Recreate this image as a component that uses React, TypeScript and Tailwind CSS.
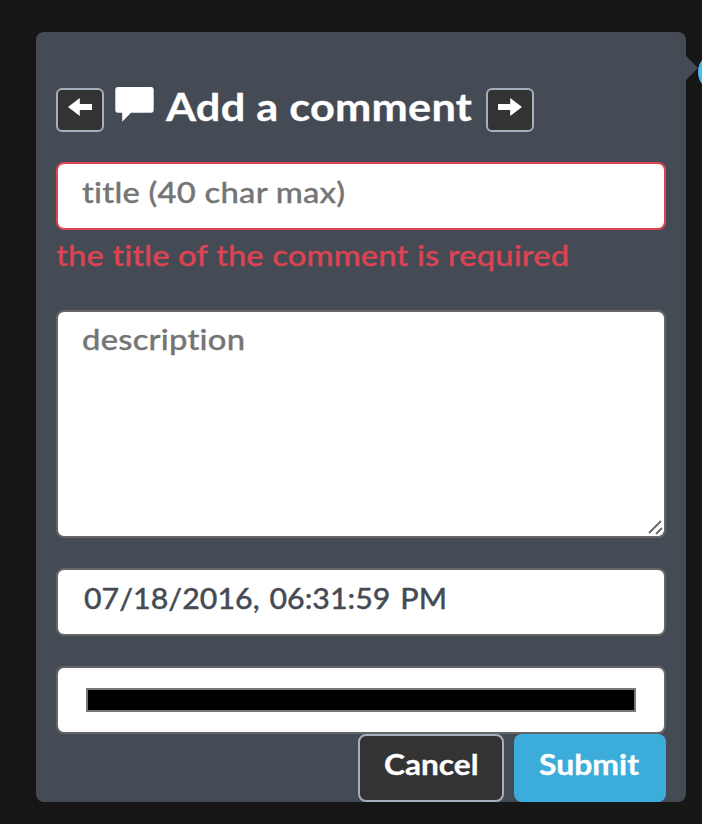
import type { ReactNode } from "react";

type LabelProps = { children: ReactNode; className: string };

function Label({ children, className }: LabelProps) {
  return (
    <span className={`block w-max origin-left whitespace-nowrap ${className}`}>{children}</span>
  );
}

function Arrow({ flipped = false }: { flipped?: boolean }) {
  return (
    <svg width="24" height="18" viewBox="0 0 24 18" className={flipped ? "-scale-x-100" : ""}>
      <path d="M0 9 11.8 0v6H24v6H11.8v6Z" fill="#fff" />
    </svg>
  );
}

const field = "h-[68px] w-full rounded-lg border-2 bg-white";
const navButton =
  "flex h-11 w-12 justify-center rounded-md border-2 border-[#a5afbd] bg-[#333] pt-2";

export default function App() {
  return (
    <main className="h-[824px] w-[702px] overflow-hidden bg-[#161616] bg-[repeating-linear-gradient(0deg,rgba(255,255,255,0.012)_0px,transparent_2px,transparent_5px),repeating-linear-gradient(90deg,rgba(0,0,0,0.08)_0px,transparent_2px,transparent_7px)] pt-8 pl-9 font-['Lato','Liberation_Sans',sans-serif] text-[28px] leading-[34px] font-medium [font-variant-ligatures:none] [-webkit-text-stroke:0.3px_currentColor]">
      <section className="relative h-[770px] w-[650px] rounded-lg bg-[#454b54] px-5 pt-14">
        <span className="absolute top-6 left-[650px] h-6 w-3 bg-[#454b54] [clip-path:polygon(0_0,100%_50%,0_100%)]" />
        <span className="absolute top-[20px] left-[661.5px] h-10 w-10 rounded-full bg-[#4bbfe5]" />

        <header className="flex h-11">
          <button className={navButton} aria-label="Previous">
            <Arrow />
          </button>
          <svg width="39" height="36" viewBox="0 0 39 36" className="-mt-px ml-[11px]">
            <path
              d="M3 0H36Q38.7 0 38.7 3V22.7Q38.7 25.7 36 25.7H16L7.2 34.7V25.7H3Q.3 25.7.3 22.7V3Q.3 0 3 0Z"
              fill="#fff"
            />
          </svg>
          <h1 className="-mt-0.5 ml-3 w-[309px] text-[38px] leading-10 font-bold text-white">
            <Label className="scale-x-[1.14] tracking-[0.2px]">Add a comment</Label>
          </h1>
          <button className={`${navButton} ml-[11px]`} aria-label="Next">
            <Arrow flipped />
          </button>
        </header>

        <form>
          <div className={`${field} mt-[30px] border-[#dc4453] pt-[11px] pl-6 text-[#757575]`}>
            <Label className="scale-x-[1.17] tracking-[0.2px]">title (40 char max)</Label>
          </div>
          <p className="mt-[8px] h-[72px] text-[#dc4453]">
            <Label className="scale-x-[1.17] tracking-[0.1px]">the title of the comment is required</Label>
          </p>
          <div className="flex h-[228px] flex-col justify-between rounded-lg border-2 border-[#666] bg-white pt-[10px] pl-6 text-[#757575]">
            <Label className="scale-x-[1.17] tracking-[0.2px]">description</Label>
            <svg width="16" height="16" viewBox="0 0 16 16" className="self-end">
              <path d="M1 13 13 1M8 14 14 8" stroke="#666" strokeWidth="1.8" fill="none" />
            </svg>
          </div>
          <div className={`${field} mt-[30px] border-[#666] pt-[11px] pl-[26px] text-[#454b54]`}>
            <Label className="scale-x-[1.085] [word-spacing:2px]">07/18/2016, 06:31:59 PM</Label>
          </div>
          <div className={`${field} mt-[30px] flex items-center border-[#666] pl-7`}>
            <span className="h-6 w-[550px] border-2 border-[#777] bg-black" />
          </div>
          <div className="flex justify-end gap-2.5 font-bold text-white">
            <button
              type="button"
              className="h-[68px] w-[146px] rounded-lg border-2 border-[#a5afbd] bg-[#333] pb-2 pl-6"
            >
              <Label className="scale-x-[1.13]">Cancel</Label>
            </button>
            <button type="button" className="h-[68px] w-[152px] rounded-lg bg-[#3cadda] pb-2 pl-[25px]">
              <Label className="scale-x-[1.14]">Submit</Label>
            </button>
          </div>
        </form>
      </section>
    </main>
  );
}
